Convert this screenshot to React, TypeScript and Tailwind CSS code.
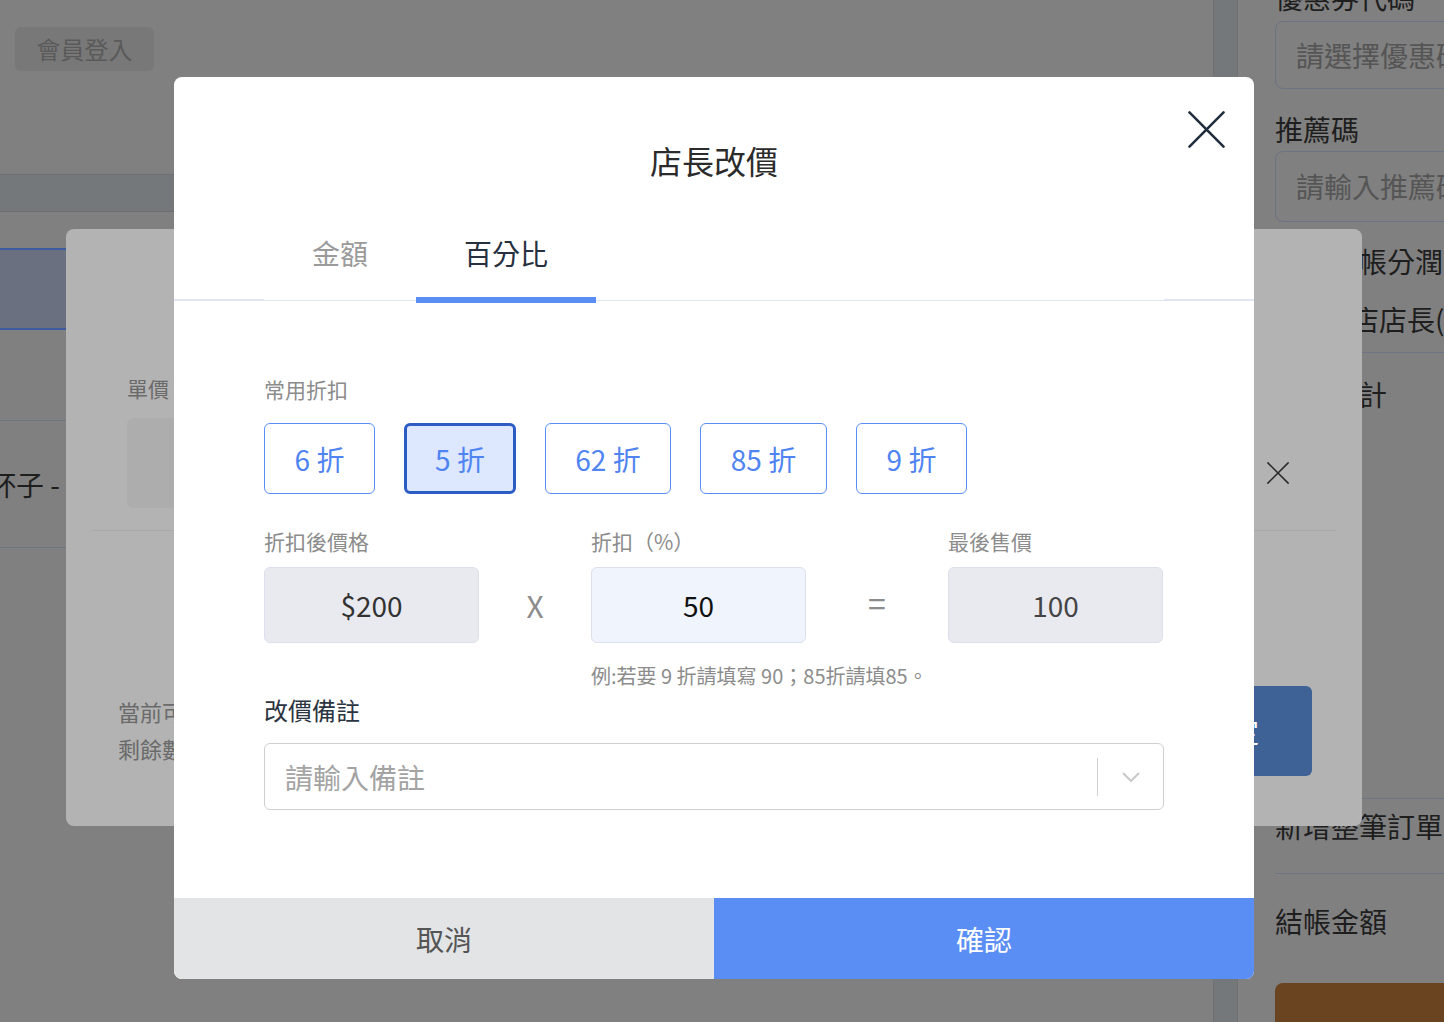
import { useState } from 'react'

const presets = [
    { label: '6 折', value: 60, w: 'w-[111px]' },
    { label: '5 折', value: 50, w: 'w-[112px]' },
    { label: '62 折', value: 62, w: 'w-[126px]' },
    { label: '85 折', value: 85, w: 'w-[127px]' },
    { label: '9 折', value: 90, w: 'w-[111px]' },
]

function CloseIcon({ className }: { className?: string }) {
    return (
        <svg viewBox="0 0 38 38" className={className} fill="none" stroke="currentColor" strokeWidth="2.6" strokeLinecap="round">
            <path d="M1.5 1.5 L36.5 36.5 M36.5 1.5 L1.5 36.5" />
        </svg>
    )
}

function BackgroundPage() {
    return (
        <div className="absolute inset-0 flex bg-[#808080]">
            {/* main column */}
            <div className="w-[1213px] flex flex-col">
                <div className="h-[174px] pl-[15px] pt-[27px]">
                    <div className="w-[139px] h-[44px] rounded-md bg-[#787878] text-[#5a5a5a] text-[24px] leading-[44px] text-center">
                        會員登入
                    </div>
                </div>
                <div className="h-[38px] bg-[#74787b] border-y border-[#6b6e72]" />
                <div className="h-[36px]" />
                <div className="h-[82px] w-[400px] bg-[#6b7080] border-y-2 border-[#3d5ca0]" />
                <div className="h-[91px] border-b border-[#6e7385]" />
                <div className="h-[127px] border-b border-[#6e7385] flex items-center">
                    <span className="-ml-[12px] text-[28px] text-[#1e1e1e] whitespace-nowrap">杯子 -</span>
                </div>
            </div>
            <div className="w-[25px] bg-[#74787b] border-x border-[#6e7175]" />
            {/* right panel */}
            <div className="flex-1 pl-[37px] overflow-hidden whitespace-nowrap text-[#1e1e1e]">
                <div className="-mt-[21px] h-[36px] text-[28px] leading-[36px]">優惠券代碼</div>
                <div className="mt-[6px] w-[300px] h-[68px] rounded-lg border border-[#6c7282] pl-[20px] text-[28px] leading-[66px] text-[#555]">
                    請選擇優惠碼
                </div>
                <div className="mt-[22px] text-[28px] leading-[36px]">推薦碼</div>
                <div className="mt-[4px] w-[300px] h-[71px] rounded-lg border border-[#6c7282] pl-[20px] text-[28px] leading-[69px] text-[#555]">
                    請輸入推薦碼
                </div>
                <div className="mt-[21px] text-[28px] leading-[36px]">店長分帳分潤</div>
                <div className="mt-[22px] pb-[15px] border-b border-[#6e7385] text-[28px] leading-[36px]">
                    <span className="-ml-[8px]">直營總店店長(店長</span>
                </div>
                <div className="pt-[23px] h-[446px] border-b border-[#6e7385] text-[28px] leading-[36px]">商品合計</div>
                <div className="pt-[9px] h-[75px] border-b border-[#6e7385] text-[28px] leading-[36px]">新增整筆訂單</div>
                <div className="mt-[29px] text-[28px] leading-[36px]">結帳金額</div>
                <div className="mt-[44px] w-[300px] h-[60px] rounded-lg bg-[#6a4420]" />
            </div>
        </div>
    )
}

function BackModal() {
    return (
        <div className="absolute left-[66px] top-[229px] w-[1296px] h-[597px] rounded-lg bg-[#b3b3b3] flex flex-col">
            <div className="mx-[25px] h-[302px] border-b border-[#a9a9a9] flex">
                <div className="pl-[36px] pt-[145px]">
                    <div className="text-[21px] leading-[28px] text-[#6a6a6a]">單價</div>
                    <div className="mt-[16px] w-[300px] h-[90px] rounded-md bg-[#adadad]" />
                </div>
                <CloseIcon className="ml-auto mr-[48px] mt-[233px] w-[22px] h-[22px] text-[#2a2a2a]" />
            </div>
            <div className="flex">
                <div className="pl-[52px] pt-[162px] text-[22px] leading-[37px] text-[#6a6a6a]">
                    <div>當前可用</div>
                    <div>剩餘數量</div>
                </div>
                <div className="ml-auto mr-[50px] mt-[155px] w-[162px] h-[90px] rounded-md bg-[#3f6296] text-white text-[28px] leading-[90px] text-center">
                    確定
                </div>
            </div>
        </div>
    )
}

export default function App() {
    const [tab, setTab] = useState<'amount' | 'percent'>('percent')
    const [discount, setDiscount] = useState<number>(50)
    const price = 200

    return (
        <div className="relative w-[1444px] h-[1022px] overflow-hidden font-['Noto_Sans_CJK_TC','Noto_Sans',sans-serif]">
            <BackgroundPage />
            <BackModal />

            <div className="absolute left-[174px] top-[77px] w-[1080px] h-[902px] rounded-lg bg-white overflow-hidden flex flex-col">
                <div className="relative pt-[63px] text-center text-[32px] leading-[40px] text-[#2b2b2b]">
                    店長改價
                    <button className="absolute right-[29px] top-[34px] text-[#1f2d3d]">
                        <CloseIcon className="w-[37px] h-[37px]" />
                    </button>
                </div>

                <div className="mt-[55px] flex items-end">
                    <div className="w-[90px] border-b-2 border-[#dfe5f2]" />
                    <div className="flex-1 flex border-b border-[#dfe5f2]">
                        <button
                            onClick={() => setTab('amount')}
                            className={`px-[48px] text-[28px] leading-[36px] pb-[26px] -mb-[3px] border-b-[6px] ${
                                tab === 'amount' ? 'text-[#263040] border-[#5b8ef5]' : 'text-[#9a9a9a] border-transparent'
                            }`}
                        >
                            金額
                        </button>
                        <button
                            onClick={() => setTab('percent')}
                            className={`px-[48px] text-[28px] leading-[36px] pb-[26px] -mb-[3px] border-b-[6px] ${
                                tab === 'percent' ? 'text-[#263040] border-[#5b8ef5]' : 'text-[#9a9a9a] border-transparent'
                            }`}
                        >
                            百分比
                        </button>
                    </div>
                    <div className="w-[90px] border-b-2 border-[#dfe5f2]" />
                </div>

                <div className="px-[90px] pt-[73px]">
                    <div className="text-[21px] leading-[30px] text-[#8c8c8c]">常用折扣</div>
                    <div className="mt-[19px] flex gap-[29px]">
                        {presets.map((p) => (
                            <button
                                key={p.label}
                                onClick={() => setDiscount(p.value)}
                                className={`${p.w} h-[71px] rounded-md text-[28px] text-[#4f84f2] ${
                                    discount === p.value
                                        ? 'bg-[#dde7fd] border-[3px] border-[#2b5dc5]'
                                        : 'bg-white border border-[#5b8ef5]'
                                }`}
                            >
                                {p.label}
                            </button>
                        ))}
                    </div>

                    <div className="mt-[32px] grid grid-cols-[215px_112px_215px_142px_215px] text-[21px] leading-[30px] text-[#8c8c8c]">
                        <div>折扣後價格</div>
                        <div />
                        <div>折扣（%）</div>
                        <div />
                        <div>最後售價</div>
                    </div>
                    <div className="mt-[11px] grid grid-cols-[215px_112px_215px_142px_215px] items-center">
                        <div className="h-[76px] rounded-md bg-[#e9eaf0] border border-[#dcdfec] flex items-center justify-center text-[28px] text-[#333]">
                            ${price}
                        </div>
                        <div className="text-center text-[30px] text-[#8c8c8c]">X</div>
                        <div className="h-[76px] rounded-md bg-[#eff4fd] border border-[#dcdfec] flex items-center justify-center text-[28px] text-[#111]">
                            {discount}
                        </div>
                        <div className="text-center text-[32px] text-[#8c8c8c] -mt-[6px]">=</div>
                        <div className="h-[76px] rounded-md bg-[#e9eaf0] border border-[#dcdfec] flex items-center justify-center text-[28px] text-[#444]">
                            {(price * discount) / 100}
                        </div>
                    </div>
                    <div className="mt-[19px] pl-[327px] text-[20px] leading-[28px] text-[#8c8c8c]">
                        例:若要 9 折請填寫 90；85折請填85。
                    </div>

                    <div className="mt-[4px] text-[24px] leading-[32px] text-[#2b3440]">改價備註</div>
                    <div className="mt-[17px] h-[67px] rounded-md border border-[#cfcfcf] flex items-center">
                        <div className="flex-1 pl-[20px] text-[28px] text-[#a3a3a3]">請輸入備註</div>
                        <div className="w-px h-[38px] bg-[#d0d0d0]" />
                        <div className="w-[65px] flex justify-center">
                            <svg viewBox="0 0 18 10" className="w-[18px] h-[10px]" fill="none" stroke="#c8c8c8" strokeWidth="2">
                                <path d="M1 1 L9 9 L17 1" />
                            </svg>
                        </div>
                    </div>
                </div>

                <div className="mt-auto h-[81px] flex text-[28px]">
                    <button className="flex-1 bg-[#e3e4e6] text-[#555]">取消</button>
                    <button className="flex-1 bg-[#5b8ef5] text-white">確認</button>
                </div>
            </div>
        </div>
    )
}
